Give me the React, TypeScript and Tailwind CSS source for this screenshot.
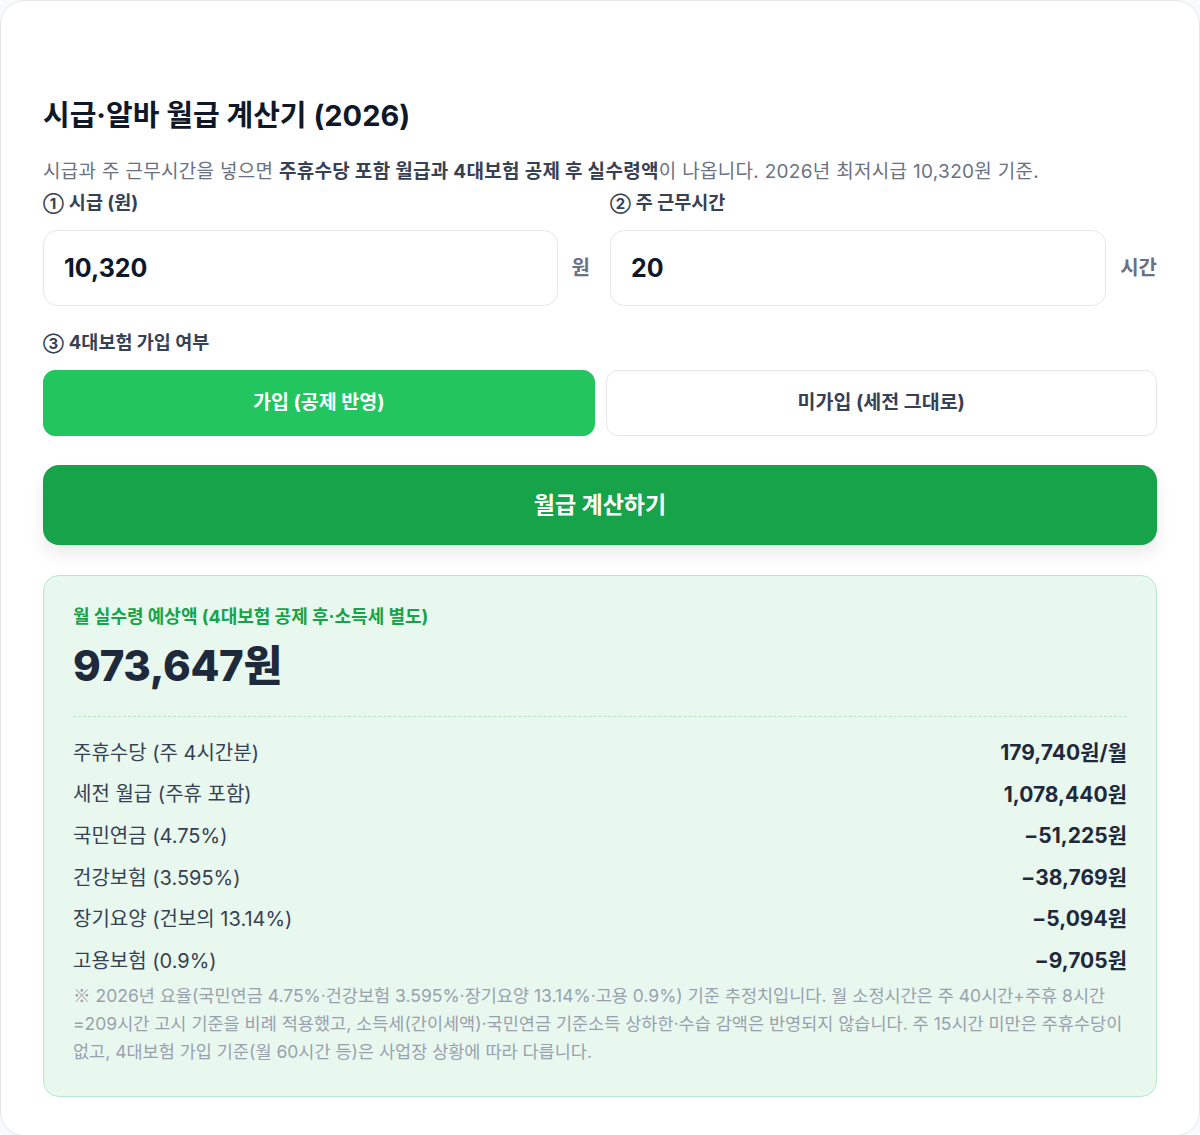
import { useState } from "react";

const rows = [
  { label: "주휴수당 (주 4시간분)", value: "179,740원/월" },
  { label: "세전 월급 (주휴 포함)", value: "1,078,440원" },
  { label: "국민연금 (4.75%)", value: "−51,225원" },
  { label: "건강보험 (3.595%)", value: "−38,769원" },
  { label: "장기요양 (건보의 13.14%)", value: "−5,094원" },
  { label: "고용보험 (0.9%)", value: "−9,705원" },
];

function Num({ n }: { n: string }) {
  return <span className="mr-[5px] text-[15px] leading-none">{n}</span>;
}

export default function App() {
  const [wage, setWage] = useState("10,320");
  const [hours, setHours] = useState("20");
  const [insured, setInsured] = useState(true);

  const on =
    "h-[66px] rounded-[12px] border border-[#22c55e] bg-[#22c55e] text-[19.5px] font-bold text-white";
  const off =
    "h-[66px] rounded-[12px] border border-gray-200 bg-white text-[19.5px] font-bold text-gray-700";

  return (
    <div
      className="min-h-[1135px] bg-gray-50"
      style={{ fontFamily: 'Inter, "Noto Sans CJK KR", sans-serif' }}
    >
      <div className="w-[1200px] rounded-[24px] border border-gray-200 bg-white px-[42px] pb-[38px] pt-[97px]">
        <h1 className="text-[29px] font-bold leading-[36px] text-gray-900">
          시급·알바 월급 계산기 (2026)
        </h1>
        <p className="mt-[24px] text-[19px] leading-[28px] tracking-[0.3px] text-gray-500">
          시급과 주 근무시간을 넣으면{" "}
          <b className="font-bold text-gray-700">
            주휴수당 포함 월급과 4대보험 공제 후 실수령액
          </b>
          이 나옵니다. 2026년 최저시급 10,320원 기준.
        </p>

        <div className="mt-[4px] grid grid-cols-2 gap-[20px]">
          <div>
            <label className="flex h-[26px] items-center text-[18.5px] font-bold text-gray-700">
              <Num n="①" />
              시급 (원)
            </label>
            <div className="mt-[14px] flex items-center gap-[14px]">
              <input
                value={wage}
                onChange={(e) => setWage(e.target.value)}
                className="h-[76px] min-w-0 flex-1 rounded-[14px] border border-gray-200 px-[20px] text-[25px] font-bold text-gray-900 outline-none"
              />
              <span className="text-[20px] font-bold text-gray-500">원</span>
            </div>
          </div>
          <div>
            <label className="flex h-[26px] items-center text-[18.5px] font-bold text-gray-700">
              <Num n="②" />주 근무시간
            </label>
            <div className="mt-[14px] flex items-center gap-[14px]">
              <input
                value={hours}
                onChange={(e) => setHours(e.target.value)}
                className="h-[76px] min-w-0 flex-1 rounded-[14px] border border-gray-200 px-[20px] text-[25px] font-bold text-gray-900 outline-none"
              />
              <span className="text-[20px] font-bold text-gray-500">시간</span>
            </div>
          </div>
        </div>

        <label className="mt-[24px] flex h-[26px] items-center text-[18.5px] font-bold text-gray-700">
          <Num n="③" />
          4대보험 가입 여부
        </label>
        <div className="mt-[14px] grid grid-cols-2 gap-[11px]">
          <button onClick={() => setInsured(true)} className={insured ? on : off}>
            가입 (공제 반영)
          </button>
          <button onClick={() => setInsured(false)} className={!insured ? on : off}>
            미가입 (세전 그대로)
          </button>
        </div>

        <button className="mt-[29px] h-[80px] w-full rounded-[16px] bg-[#16a34a] text-[23px] font-bold text-white shadow-[0_10px_18px_rgba(0,0,0,0.08)]">
          월급 계산하기
        </button>

        <div className="mt-[30px] rounded-[16px] border border-[#b6e8c8] bg-[#e8f8ee] px-[29px] pb-[30px] pt-[29px]">
          <div className="text-[18px] font-bold leading-[24px] text-[#16a34a]">
            월 실수령 예상액 (4대보험 공제 후·소득세 별도)
          </div>
          <div className="mt-[13px] text-[42px] font-extrabold leading-[48px] tracking-[-0.3px] text-[#1e293b]">
            973,647원
          </div>
          <div className="mt-[26px] border-t border-dashed border-[#b6e3c6]" />
          <div className="mt-[15px]">
            {rows.map((r) => (
              <div
                key={r.label}
                className="flex h-[41.6px] items-center justify-between"
              >
                <span className="text-[20px] text-gray-700">{r.label}</span>
                <span className="text-[21px] font-bold text-[#1e293b]">{r.value}</span>
              </div>
            ))}
          </div>
          <p className="text-[17.5px] leading-[28px] text-gray-400">
            <span className="mr-[5px] inline-block font-['Noto_Sans_CJK_KR'] leading-none">※</span>2026년 요율(국민연금 4.75%·건강보험 3.595%·장기요양 13.14%·고용 0.9%) 기준 추정치입니다. 월 소정시간은 주 40시간+주휴 8시간 =209시간 고시 기준을 비례 적용했고, 소득세(간이세액)·국민연금 기준소득 상하한·수습 감액은 반영되지 않습니다. 주 15시간 미만은 주휴수당이 없고, 4대보험 가입 기준(월 60시간 등)은 사업장 상황에 따라 다릅니다.
          </p>
        </div>
      </div>
    </div>
  );
}
